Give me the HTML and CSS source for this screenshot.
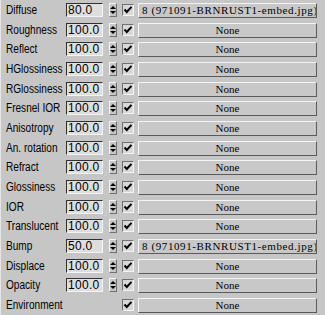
FILE: index.html
```html
<!DOCTYPE html>
<html lang="en">
<head>
    <meta charset="UTF-8">
    <title>Maps</title>
    <link rel="stylesheet" href="styles.css">
</head>
<body>
    <div class="panel">
        <div class="row">
            <span class="label">Diffuse</span>
            <div class="field">80.0</div>
            <div class="spin"><i class="up"></i><i class="down"></i></div>
            <div class="check"><svg width="10" height="10" viewBox="0 0 10 10"><polyline points="1.5,4.5 3.8,7 8.5,1.8" /></svg></div>
            <div class="map map-file">8 (971091-BRNRUST1-embed.jpg)</div>
        </div>
        <div class="row">
            <span class="label">Roughness</span>
            <div class="field">100.0</div>
            <div class="spin"><i class="up"></i><i class="down"></i></div>
            <div class="check"><svg width="10" height="10" viewBox="0 0 10 10"><polyline points="1.5,4.5 3.8,7 8.5,1.8" /></svg></div>
            <div class="map">None</div>
        </div>
        <div class="row">
            <span class="label">Reflect</span>
            <div class="field">100.0</div>
            <div class="spin"><i class="up"></i><i class="down"></i></div>
            <div class="check"><svg width="10" height="10" viewBox="0 0 10 10"><polyline points="1.5,4.5 3.8,7 8.5,1.8" /></svg></div>
            <div class="map">None</div>
        </div>
        <div class="row">
            <span class="label">HGlossiness</span>
            <div class="field">100.0</div>
            <div class="spin"><i class="up"></i><i class="down"></i></div>
            <div class="check"><svg width="10" height="10" viewBox="0 0 10 10"><polyline points="1.5,4.5 3.8,7 8.5,1.8" /></svg></div>
            <div class="map">None</div>
        </div>
        <div class="row">
            <span class="label">RGlossiness</span>
            <div class="field">100.0</div>
            <div class="spin"><i class="up"></i><i class="down"></i></div>
            <div class="check"><svg width="10" height="10" viewBox="0 0 10 10"><polyline points="1.5,4.5 3.8,7 8.5,1.8" /></svg></div>
            <div class="map">None</div>
        </div>
        <div class="row">
            <span class="label">Fresnel IOR</span>
            <div class="field">100.0</div>
            <div class="spin"><i class="up"></i><i class="down"></i></div>
            <div class="check"><svg width="10" height="10" viewBox="0 0 10 10"><polyline points="1.5,4.5 3.8,7 8.5,1.8" /></svg></div>
            <div class="map">None</div>
        </div>
        <div class="row">
            <span class="label">Anisotropy</span>
            <div class="field">100.0</div>
            <div class="spin"><i class="up"></i><i class="down"></i></div>
            <div class="check"><svg width="10" height="10" viewBox="0 0 10 10"><polyline points="1.5,4.5 3.8,7 8.5,1.8" /></svg></div>
            <div class="map">None</div>
        </div>
        <div class="row">
            <span class="label">An. rotation</span>
            <div class="field">100.0</div>
            <div class="spin"><i class="up"></i><i class="down"></i></div>
            <div class="check"><svg width="10" height="10" viewBox="0 0 10 10"><polyline points="1.5,4.5 3.8,7 8.5,1.8" /></svg></div>
            <div class="map">None</div>
        </div>
        <div class="row">
            <span class="label">Refract</span>
            <div class="field">100.0</div>
            <div class="spin"><i class="up"></i><i class="down"></i></div>
            <div class="check"><svg width="10" height="10" viewBox="0 0 10 10"><polyline points="1.5,4.5 3.8,7 8.5,1.8" /></svg></div>
            <div class="map">None</div>
        </div>
        <div class="row">
            <span class="label">Glossiness</span>
            <div class="field">100.0</div>
            <div class="spin"><i class="up"></i><i class="down"></i></div>
            <div class="check"><svg width="10" height="10" viewBox="0 0 10 10"><polyline points="1.5,4.5 3.8,7 8.5,1.8" /></svg></div>
            <div class="map">None</div>
        </div>
        <div class="row">
            <span class="label">IOR</span>
            <div class="field">100.0</div>
            <div class="spin"><i class="up"></i><i class="down"></i></div>
            <div class="check"><svg width="10" height="10" viewBox="0 0 10 10"><polyline points="1.5,4.5 3.8,7 8.5,1.8" /></svg></div>
            <div class="map">None</div>
        </div>
        <div class="row">
            <span class="label">Translucent</span>
            <div class="field">100.0</div>
            <div class="spin"><i class="up"></i><i class="down"></i></div>
            <div class="check"><svg width="10" height="10" viewBox="0 0 10 10"><polyline points="1.5,4.5 3.8,7 8.5,1.8" /></svg></div>
            <div class="map">None</div>
        </div>
        <div class="row">
            <span class="label">Bump</span>
            <div class="field">50.0</div>
            <div class="spin"><i class="up"></i><i class="down"></i></div>
            <div class="check"><svg width="10" height="10" viewBox="0 0 10 10"><polyline points="1.5,4.5 3.8,7 8.5,1.8" /></svg></div>
            <div class="map map-file">8 (971091-BRNRUST1-embed.jpg)</div>
        </div>
        <div class="row">
            <span class="label">Displace</span>
            <div class="field">100.0</div>
            <div class="spin"><i class="up"></i><i class="down"></i></div>
            <div class="check"><svg width="10" height="10" viewBox="0 0 10 10"><polyline points="1.5,4.5 3.8,7 8.5,1.8" /></svg></div>
            <div class="map">None</div>
        </div>
        <div class="row">
            <span class="label">Opacity</span>
            <div class="field">100.0</div>
            <div class="spin"><i class="up"></i><i class="down"></i></div>
            <div class="check"><svg width="10" height="10" viewBox="0 0 10 10"><polyline points="1.5,4.5 3.8,7 8.5,1.8" /></svg></div>
            <div class="map">None</div>
        </div>
        <div class="row">
            <span class="label">Environment</span>
            <div class="check check-only"><svg width="10" height="10" viewBox="0 0 10 10"><polyline points="1.5,4.5 3.8,7 8.5,1.8" /></svg></div>
            <div class="map">None</div>
        </div>
    </div>
</body>
</html>
```

FILE: styles.css
```css
body, html {
    margin: 0;
    padding: 0;
    background-color: #c6c6c6;
    overflow: hidden;
}

.panel {
    display: flex;
    flex-direction: column;
    width: 325px;
    height: 315px;
    box-sizing: border-box;
    border-left: 1px solid #e6e6e6;
}

.row {
    display: grid;
    grid-template-columns: 60px 43px 13px 16px 179px;
    align-items: center;
    height: 21px;
    padding-left: 5px;
}

.label {
    display: inline-block;
    font-family: "Liberation Sans", Arial, sans-serif;
    font-size: 12px;
    color: #000;
    white-space: nowrap;
    transform: scaleX(0.84);
    transform-origin: left center;
}

.field {
    width: 37px;
    height: 14px;
    box-sizing: border-box;
    border: 1px solid;
    border-color: #303030 #f4f4f4 #f4f4f4 #303030;
    background-color: #dedede;
    font-family: "Liberation Sans", Arial, sans-serif;
    font-size: 12px;
    line-height: 12px;
    padding-left: 1px;
    color: #000;
    letter-spacing: 0.3px;
}

.spin {
    width: 8px;
    height: 14px;
    box-sizing: border-box;
    border: 1px solid;
    border-color: #f4f4f4 #707070 #707070 #f4f4f4;
    display: flex;
    flex-direction: column;
    align-items: center;
    justify-content: space-between;
    padding: 2px 0;
}

.spin i {
    display: block;
    width: 0;
    height: 0;
    border-left: 3px solid transparent;
    border-right: 3px solid transparent;
}

.spin .up {
    border-bottom: 3px solid #000;
}

.spin .down {
    border-top: 3px solid #000;
}

.check {
    width: 12px;
    height: 12px;
    box-sizing: border-box;
    border: 1px solid;
    border-color: #707070 #f4f4f4 #f4f4f4 #707070;
    background-color: #d8d8d8;
    display: flex;
    align-items: center;
    justify-content: center;
}

.check svg polyline {
    fill: none;
    stroke: #000;
    stroke-width: 2;
}

.check-only {
    grid-column: 4;
}

.map {
    height: 15px;
    box-sizing: border-box;
    border: 1px solid;
    border-color: #f4f4f4 #5a5a5a #5a5a5a #f4f4f4;
    background-color: #c8c8c8;
    font-family: "Liberation Serif", "Times New Roman", serif;
    font-size: 11px;
    line-height: 13px;
    text-align: center;
    color: #000;
    white-space: nowrap;
    overflow: hidden;
    margin-top: 1px;
}

.map-file {
    text-align: left;
    padding-left: 3px;
    letter-spacing: 0.6px;
}
```
